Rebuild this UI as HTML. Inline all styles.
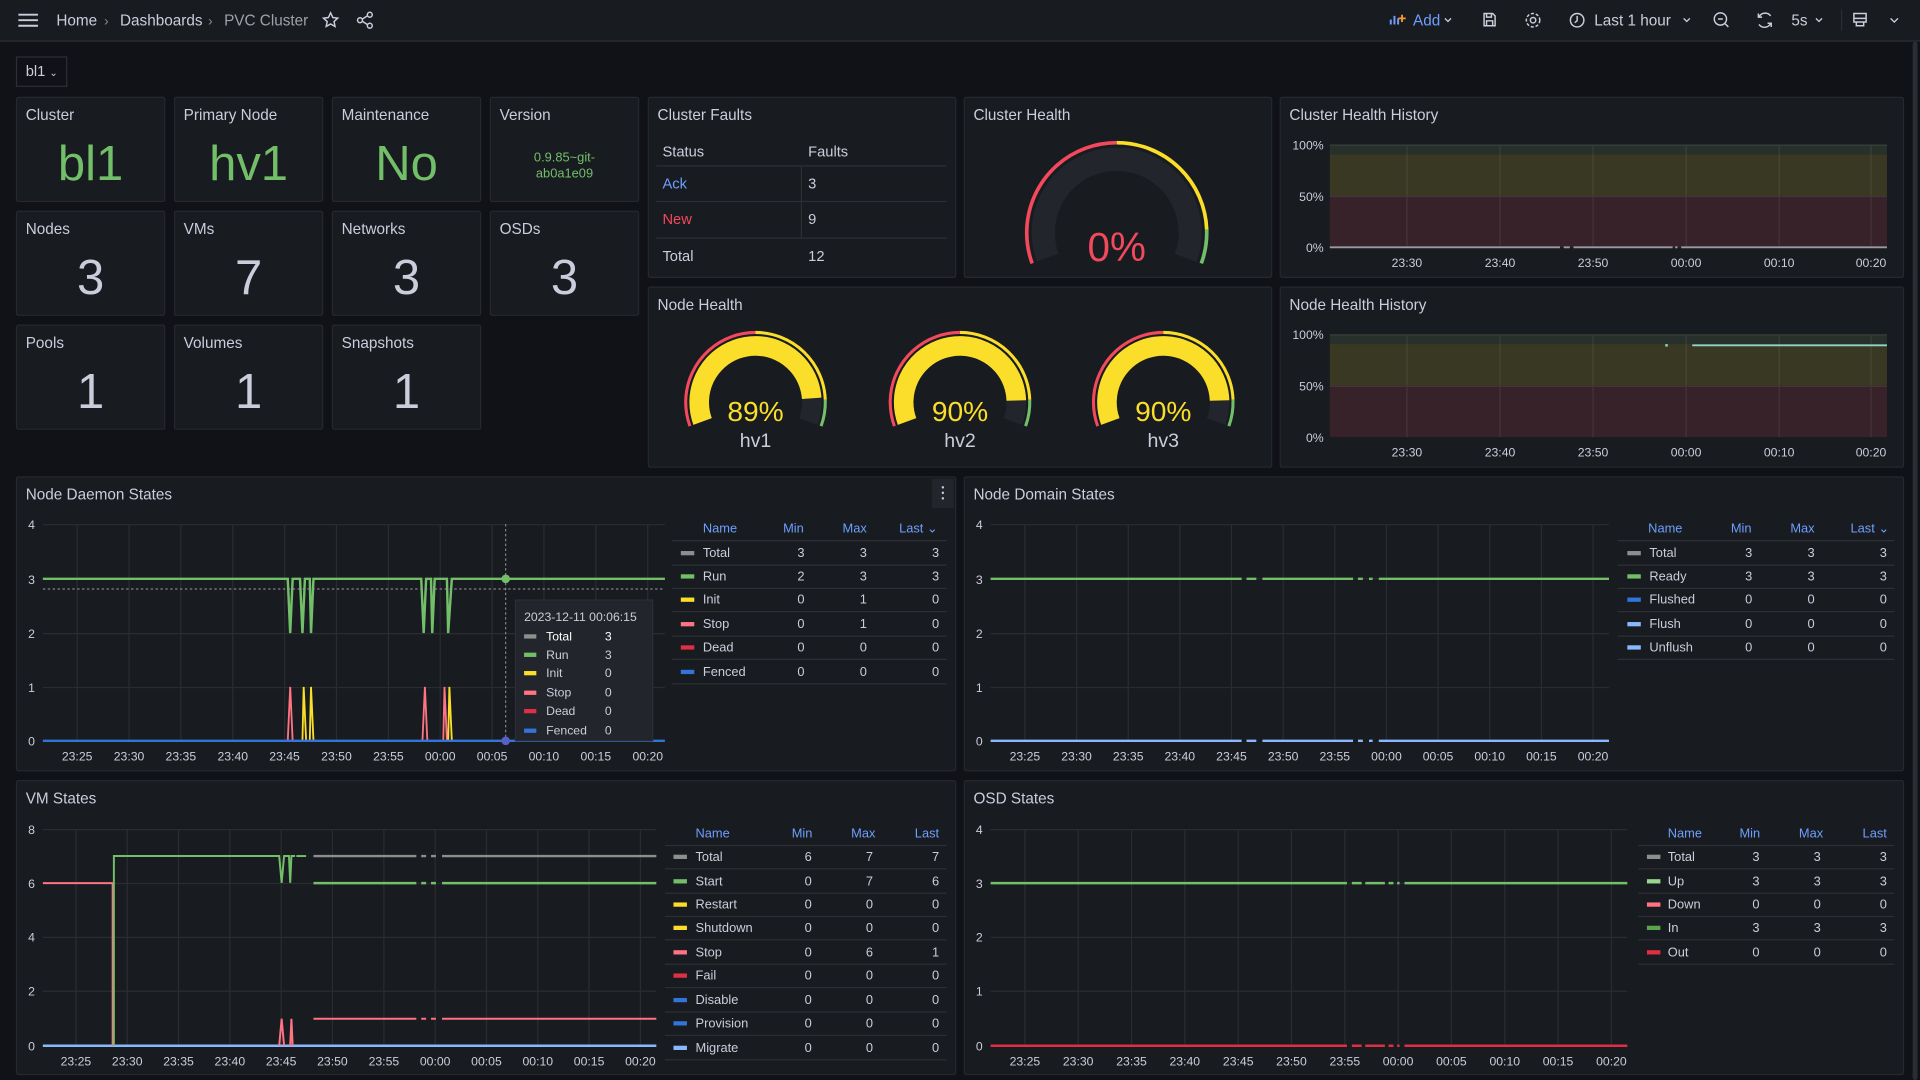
<!DOCTYPE html>
<html><head><meta charset="utf-8"><style>
html,body{margin:0;padding:0;background:#111217;width:1920px;height:1080px;overflow:hidden}
#root{position:absolute;left:0;top:0;width:1568px;height:882px;transform:scale(1.2244898);transform-origin:0 0;font-family:"Liberation Sans",sans-serif;color:#ccccdc}
.top{position:absolute;left:0;top:0;width:1568px;height:33px;background:#181b1f;border-bottom:1px solid #2c2f36}
.p{position:absolute;background:#181b1f;border:1px solid #25282e;box-sizing:border-box;border-radius:2px}
.t{position:absolute;left:7px;top:7px;font-size:12.5px;color:#ccccdc}
.v{position:absolute;left:0;right:0;text-align:center}
svg text{font-family:"Liberation Sans",sans-serif}
</style></head><body><div id="root">
<div class="top"></div>
<div style="position:absolute;left:1562px;top:34px;width:4px;height:848px;background:#2a2d33;border-radius:2px"></div>
<div style="position:absolute;left:13px;top:46px;width:42px;height:25px;border:1px solid #2c2f36;box-sizing:border-box;background:#111217;font-size:12px;line-height:23px;padding-left:7px">bl1 <span style="font-size:8px">⌄</span></div>

<div class="p" style="left:13px;top:79px;width:122px;height:86px"><div class="t">Cluster</div><div class="v" style="top:32px;font-size:40px;color:#73bf69">bl1</div></div>
<div class="p" style="left:142px;top:79px;width:122px;height:86px"><div class="t">Primary Node</div><div class="v" style="top:32px;font-size:40px;color:#73bf69">hv1</div></div>
<div class="p" style="left:271px;top:79px;width:122px;height:86px"><div class="t">Maintenance</div><div class="v" style="top:32px;font-size:40px;color:#73bf69">No</div></div>
<div class="p" style="left:400px;top:79px;width:122px;height:86px"><div class="t">Version</div><div class="v" style="top:43px;font-size:10.5px;line-height:13px;color:#73bf69">0.9.85~git-<br>ab0a1e09</div></div>
<div class="p" style="left:13px;top:172px;width:122px;height:86px"><div class="t">Nodes</div><div class="v" style="top:32px;font-size:40px">3</div></div>
<div class="p" style="left:142px;top:172px;width:122px;height:86px"><div class="t">VMs</div><div class="v" style="top:32px;font-size:40px">7</div></div>
<div class="p" style="left:271px;top:172px;width:122px;height:86px"><div class="t">Networks</div><div class="v" style="top:32px;font-size:40px">3</div></div>
<div class="p" style="left:400px;top:172px;width:122px;height:86px"><div class="t">OSDs</div><div class="v" style="top:32px;font-size:40px">3</div></div>
<div class="p" style="left:13px;top:265px;width:122px;height:86px"><div class="t">Pools</div><div class="v" style="top:32px;font-size:40px">1</div></div>
<div class="p" style="left:142px;top:265px;width:122px;height:86px"><div class="t">Volumes</div><div class="v" style="top:32px;font-size:40px">1</div></div>
<div class="p" style="left:271px;top:265px;width:122px;height:86px"><div class="t">Snapshots</div><div class="v" style="top:32px;font-size:40px">1</div></div>

<div class="p" style="left:529px;top:79px;width:252px;height:148px"><div class="t">Cluster Faults</div></div>
<div class="p" style="left:787px;top:79px;width:252px;height:148px"><div class="t">Cluster Health</div></div>
<div class="p" style="left:1045px;top:79px;width:510px;height:148px"><div class="t">Cluster Health History</div></div>
<div class="p" style="left:529px;top:234px;width:510px;height:148px"><div class="t">Node Health</div></div>
<div class="p" style="left:1045px;top:234px;width:510px;height:148px"><div class="t">Node Health History</div></div>
<div class="p" style="left:13px;top:389px;width:768px;height:241px"><div class="t">Node Daemon States</div></div>
<div class="p" style="left:787px;top:389px;width:768px;height:241px"><div class="t">Node Domain States</div></div>
<div class="p" style="left:13px;top:637px;width:768px;height:241px"><div class="t">VM States</div></div>
<div class="p" style="left:787px;top:637px;width:768px;height:241px"><div class="t">OSD States</div></div>

<svg width="1568" height="882" style="position:absolute;left:0;top:0" font-size="12">
<!-- topbar -->
<g stroke="#ccccdc" stroke-width="1.6" fill="none">
<path d="M15 12H31M15 16.5H31M15 21H31"/>
<path d="M270 10.5l1.8 3.8 4 .5-3 2.8.8 4-3.6-2-3.6 2 .8-4-3-2.8 4-.5z" stroke-width="1.2"/>
<circle cx="302" cy="12" r="2" stroke-width="1.2"/><circle cx="294" cy="16.5" r="2" stroke-width="1.2"/><circle cx="302" cy="21" r="2" stroke-width="1.2"/><path d="M296 15.5l4-2.5M296 17.5l4 2.5" stroke-width="1.2"/>
<path d="M1212 11h7l2 2v8h-9zM1214 11v3h4v-3M1214 21v-4h5v4" stroke-width="1.2"/>
<circle cx="1252" cy="16.5" r="2.2" stroke-width="1.2"/><circle cx="1252" cy="16.5" r="5.5" stroke-width="1.2" stroke-dasharray="2.5 1.5"/>
<circle cx="1288" cy="16.5" r="5.5" stroke-width="1.2"/><path d="M1288 13v4l-2 1.5" stroke-width="1.2"/>
<circle cx="1405" cy="15.5" r="5" stroke-width="1.2"/><path d="M1403 15.5h4M1409 19.5l2.5 2.5" stroke-width="1.2"/>
<path d="M1446 13a5.5 5.5 0 0 0-9.5 1M1436.5 20a5.5 5.5 0 0 0 9.5-1M1436 11v3h3M1446.5 22v-3h-3" stroke-width="1.2"/>
<path d="M1514 11h10v7h-10zM1516 18v3h6v-3M1514 15h10" stroke-width="1.2"/>
<path d="M1180 15l2.5 2.5 2.5-2.5M1375 15l2.5 2.5 2.5-2.5M1483 15l2.5 2.5 2.5-2.5M1544 15l3 3 3-3" stroke-width="1.1"/>
</g>
<path d="M1135 20v-4h1.6v4zM1138 20v-7h1.6v7zM1141 20v-5h1.6v5z" fill="#6e9fff"/><path d="M1145 12v6M1142 15h6" stroke="#ff9830" stroke-width="1.5"/>
<line x1="1504" y1="8" x2="1504" y2="25" stroke="#2c2f36"/>
<text x="46" y="21" fill="#ccccdc" font-size="12.5">Home</text>
<text x="85" y="21" fill="#8e8e99" font-size="11">›</text>
<text x="98" y="21" fill="#ccccdc" font-size="12.5">Dashboards</text>
<text x="170" y="21" fill="#8e8e99" font-size="11">›</text>
<text x="183" y="21" fill="#9fa1a8" font-size="12.5">PVC Cluster</text>
<text x="1154" y="21" fill="#6e9fff" font-size="12.5">Add</text>
<text x="1302" y="21" fill="#ccccdc" font-size="12.5">Last 1 hour</text>
<text x="1463" y="21" fill="#ccccdc" font-size="12.5">5s</text>

<!-- cluster faults -->
<g font-size="12">
<text x="541" y="128" fill="#ccccdc">Status</text><text x="660" y="128" fill="#ccccdc">Faults</text>
<text x="541" y="154" fill="#6e9fff">Ack</text><text x="660" y="154" fill="#ccccdc">3</text>
<text x="541" y="183" fill="#f2495c">New</text><text x="660" y="183" fill="#ccccdc">9</text>
<text x="541" y="213" fill="#ccccdc">Total</text><text x="660" y="213" fill="#ccccdc">12</text>
</g>
<g stroke="#2c2f36"><path d="M536 135.5H773M536 164.5H773M536 194.5H773M654.5 136V194"/></g>

<!-- cluster gauge -->
<g fill="none">
<circle cx="912" cy="190" r="60" stroke="#22252b" stroke-width="19" stroke-dasharray="230.4 1000" transform="rotate(-200 912 190)"/>
<circle cx="912" cy="190" r="73.5" stroke="#f2495c" stroke-width="3" stroke-dasharray="141.1 1000" transform="rotate(-200 912 190)"/>
<circle cx="912" cy="190" r="73.5" stroke="#fade2a" stroke-width="3" stroke-dasharray="112.9 1000" transform="rotate(-90 912 190)"/>
<circle cx="912" cy="190" r="73.5" stroke="#73bf69" stroke-width="3" stroke-dasharray="28.2 1000" transform="rotate(-2 912 190)"/>
</g>
<text x="912" y="213" fill="#f2495c" font-size="33" text-anchor="middle">0%</text>

<!-- node gauges -->
<g fill="none">
<g id="g1">
<circle cx="617" cy="328.5" r="46" stroke="#22252b" stroke-width="16" stroke-dasharray="176.6 1000" transform="rotate(-200 617 328.5)"/>
<circle cx="617" cy="328.5" r="46" stroke="#fade2a" stroke-width="16" stroke-dasharray="157.2 1000" transform="rotate(-200 617 328.5)"/>
<circle cx="617" cy="328.5" r="57" stroke="#f2495c" stroke-width="2.5" stroke-dasharray="109.4 1000" transform="rotate(-200 617 328.5)"/>
<circle cx="617" cy="328.5" r="57" stroke="#fade2a" stroke-width="2.5" stroke-dasharray="87.5 1000" transform="rotate(-90 617 328.5)"/>
<circle cx="617" cy="328.5" r="57" stroke="#73bf69" stroke-width="2.5" stroke-dasharray="21.9 1000" transform="rotate(-2 617 328.5)"/>
</g>
<circle cx="784" cy="328.5" r="46" stroke="#22252b" stroke-width="16" stroke-dasharray="176.6 1000" transform="rotate(-200 784 328.5)"/>
<circle cx="784" cy="328.5" r="46" stroke="#fade2a" stroke-width="16" stroke-dasharray="159 1000" transform="rotate(-200 784 328.5)"/>
<circle cx="784" cy="328.5" r="57" stroke="#f2495c" stroke-width="2.5" stroke-dasharray="109.4 1000" transform="rotate(-200 784 328.5)"/>
<circle cx="784" cy="328.5" r="57" stroke="#fade2a" stroke-width="2.5" stroke-dasharray="87.5 1000" transform="rotate(-90 784 328.5)"/>
<circle cx="784" cy="328.5" r="57" stroke="#73bf69" stroke-width="2.5" stroke-dasharray="21.9 1000" transform="rotate(-2 784 328.5)"/>
<circle cx="950" cy="328.5" r="46" stroke="#22252b" stroke-width="16" stroke-dasharray="176.6 1000" transform="rotate(-200 950 328.5)"/>
<circle cx="950" cy="328.5" r="46" stroke="#fade2a" stroke-width="16" stroke-dasharray="159 1000" transform="rotate(-200 950 328.5)"/>
<circle cx="950" cy="328.5" r="57" stroke="#f2495c" stroke-width="2.5" stroke-dasharray="109.4 1000" transform="rotate(-200 950 328.5)"/>
<circle cx="950" cy="328.5" r="57" stroke="#fade2a" stroke-width="2.5" stroke-dasharray="87.5 1000" transform="rotate(-90 950 328.5)"/>
<circle cx="950" cy="328.5" r="57" stroke="#73bf69" stroke-width="2.5" stroke-dasharray="21.9 1000" transform="rotate(-2 950 328.5)"/>
</g>
<g font-size="23" fill="#fade2a" text-anchor="middle"><text x="617" y="344">89%</text><text x="784" y="344">90%</text><text x="950" y="344">90%</text></g>
<g font-size="16" fill="#ccccdc" text-anchor="middle"><text x="617" y="365">hv1</text><text x="784" y="365">hv2</text><text x="950" y="365">hv3</text></g>

<!-- health histories -->
<g>
<rect x="1086" y="118" width="455" height="8" fill="#27302a"/><rect x="1086" y="126" width="455" height="34" fill="#393822"/><rect x="1086" y="160" width="455" height="42" fill="#38222a"/>
<rect x="1086" y="273" width="455" height="8" fill="#27302a"/><rect x="1086" y="281" width="455" height="34" fill="#393822"/><rect x="1086" y="315" width="455" height="42" fill="#38222a"/>
<g stroke="#ffffff" stroke-opacity="0.08"><path d="M1149 118V202M1225 118V202M1301 118V202M1377 118V202M1453 118V202M1528 118V202M1086 118.5H1541M1086 160.5H1541"/>
<path d="M1149 273V357M1225 273V357M1301 273V357M1377 273V357M1453 273V357M1528 273V357M1086 273.5H1541M1086 315.5H1541"/></g>
<path d="M1086 202H1274M1277 202H1282M1285 202H1366M1368 202H1370M1373 202H1541" stroke="#9a9aa4" stroke-width="1.5"/>
<path d="M1382 282H1541" stroke="#8fd6c7" stroke-width="1.5"/><rect x="1360" y="281" width="2" height="2" fill="#8fd6c7"/>
<g font-size="10" fill="#ccccdc" text-anchor="end"><text x="1081" y="122">100%</text><text x="1081" y="164">50%</text><text x="1081" y="206">0%</text>
<text x="1081" y="277">100%</text><text x="1081" y="319">50%</text><text x="1081" y="361">0%</text></g>
<g font-size="10" fill="#ccccdc" text-anchor="middle"><text x="1149" y="218">23:30</text><text x="1225" y="218">23:40</text><text x="1301" y="218">23:50</text><text x="1377" y="218">00:00</text><text x="1453" y="218">00:10</text><text x="1528" y="218">00:20</text>
<text x="1149" y="373">23:30</text><text x="1225" y="373">23:40</text><text x="1301" y="373">23:50</text><text x="1377" y="373">00:00</text><text x="1453" y="373">00:10</text><text x="1528" y="373">00:20</text></g>
</g>

<!-- Node daemon states -->
<rect x="761" y="391" width="18" height="24" fill="#22252b"/><g fill="#ccccdc"><circle cx="770" cy="398" r="1"/><circle cx="770" cy="402.5" r="1"/><circle cx="770" cy="407" r="1"/></g>
<g stroke="#ffffff" stroke-opacity="0.08">
<path d="M35 428.5H543M35 472.5H543M35 517.5H543M35 561.5H543M63 428V605M105.4 428V605M147.7 428V605M190.1 428V605M232.4 428V605M274.8 428V605M317.2 428V605M359.5 428V605M401.9 428V605M444.2 428V605M486.6 428V605M529 428V605"/>
<path d="M809 428.5H1314M809 472.5H1314M809 517.5H1314M809 561.5H1314M837 428V605M879.2 428V605M921.4 428V605M963.5 428V605M1005.7 428V605M1047.9 428V605M1090.1 428V605M1132.3 428V605M1174.4 428V605M1216.6 428V605M1258.8 428V605M1301 428V605"/>
<path d="M35 677.5H536M35 721.5H536M35 765.5H536M35 809.5H536M62 677V854M103.9 677V854M145.8 677V854M187.7 677V854M229.6 677V854M271.5 677V854M313.5 677V854M355.4 677V854M397.3 677V854M439.2 677V854M481.1 677V854M523 677V854"/>
<path d="M809 677.5H1329M809 721.5H1329M809 765.5H1329M809 809.5H1329M837 677V854M880.5 677V854M924.1 677V854M967.6 677V854M1011.2 677V854M1054.7 677V854M1098.3 677V854M1141.8 677V854M1185.3 677V854M1228.9 677V854M1272.4 677V854M1316 677V854"/>
</g>
<g font-size="10" fill="#ccccdc">
<text x="23" y="432">4</text><text x="23" y="477">3</text><text x="23" y="521">2</text><text x="23" y="565">1</text><text x="23" y="609">0</text>
<text x="797" y="432">4</text><text x="797" y="477">3</text><text x="797" y="521">2</text><text x="797" y="565">1</text><text x="797" y="609">0</text>
<text x="23" y="681">8</text><text x="23" y="725">6</text><text x="23" y="769">4</text><text x="23" y="813">2</text><text x="23" y="858">0</text>
<text x="797" y="681">4</text><text x="797" y="725">3</text><text x="797" y="769">2</text><text x="797" y="813">1</text><text x="797" y="858">0</text>
</g>
<g font-size="10" fill="#ccccdc" text-anchor="middle">
<text x="63" y="621">23:25</text><text x="105.4" y="621">23:30</text><text x="147.7" y="621">23:35</text><text x="190.1" y="621">23:40</text><text x="232.4" y="621">23:45</text><text x="274.8" y="621">23:50</text><text x="317.2" y="621">23:55</text><text x="359.5" y="621">00:00</text><text x="401.9" y="621">00:05</text><text x="444.2" y="621">00:10</text><text x="486.6" y="621">00:15</text><text x="529" y="621">00:20</text>
<text x="837" y="621">23:25</text><text x="879.2" y="621">23:30</text><text x="921.4" y="621">23:35</text><text x="963.5" y="621">23:40</text><text x="1005.7" y="621">23:45</text><text x="1047.9" y="621">23:50</text><text x="1090.1" y="621">23:55</text><text x="1132.3" y="621">00:00</text><text x="1174.4" y="621">00:05</text><text x="1216.6" y="621">00:10</text><text x="1258.8" y="621">00:15</text><text x="1301" y="621">00:20</text>
<text x="62" y="870">23:25</text><text x="103.9" y="870">23:30</text><text x="145.8" y="870">23:35</text><text x="187.7" y="870">23:40</text><text x="229.6" y="870">23:45</text><text x="271.5" y="870">23:50</text><text x="313.5" y="870">23:55</text><text x="355.4" y="870">00:00</text><text x="397.3" y="870">00:05</text><text x="439.2" y="870">00:10</text><text x="481.1" y="870">00:15</text><text x="523" y="870">00:20</text>
<text x="837" y="870">23:25</text><text x="880.5" y="870">23:30</text><text x="924.1" y="870">23:35</text><text x="967.6" y="870">23:40</text><text x="1011.2" y="870">23:45</text><text x="1054.7" y="870">23:50</text><text x="1098.3" y="870">23:55</text><text x="1141.8" y="870">00:00</text><text x="1185.3" y="870">00:05</text><text x="1228.9" y="870">00:10</text><text x="1272.4" y="870">00:15</text><text x="1316" y="870">00:20</text>
</g>
<!-- daemon lines -->
<g fill="none" stroke-width="1.5">
<path d="M235 605L237 561L239 605M345 605L347 561L349 605M362 605L363 561L365 605" stroke="#ff7383"/>
<path d="M247 605L248 561L250 605M253 605L254 561L256 605M366 605L367 561L369 605" stroke="#fade2a"/>
<path d="M35 472.7H235L237 517L239 472.7H245L247 517L249 472.7H253L254 517L256 472.7H344L346 517L348 472.7H352L353 517L355 472.7H365L366 517L369 472.7H543" stroke="#73bf69" stroke-width="2"/>
<path d="M35 605H543" stroke="#3274d9" stroke-width="2"/>
<path d="M413 428V605M35 481H543" stroke="#9a9aa4" stroke-width="0.8" stroke-dasharray="2 2"/>
</g>
<circle cx="413" cy="472.7" r="3.5" fill="#73bf69"/><circle cx="413" cy="605" r="3.5" fill="#5a5ec7"/>
<rect x="421" y="490" width="112" height="115" fill="#22252b" stroke="#2c2f36"/>
<g font-size="10" fill="#ccccdc">
<text x="428" y="507">2023-12-11 00:06:15</text>
<text x="446" y="523" fill="#fff">Total</text><text x="494" y="523" fill="#fff">3</text>
<text x="446" y="538">Run</text><text x="494" y="538">3</text>
<text x="446" y="553">Init</text><text x="494" y="553">0</text>
<text x="446" y="569">Stop</text><text x="494" y="569">0</text>
<text x="446" y="584">Dead</text><text x="494" y="584">0</text>
<text x="446" y="600">Fenced</text><text x="494" y="600">0</text>
</g>
<g><rect x="428" y="518" width="10" height="3.5" fill="#8e8e8e"/><rect x="428" y="533" width="10" height="3.5" fill="#73bf69"/><rect x="428" y="548" width="10" height="3.5" fill="#fade2a"/><rect x="428" y="564" width="10" height="3.5" fill="#ff7383"/><rect x="428" y="579" width="10" height="3.5" fill="#e02f44"/><rect x="428" y="595" width="10" height="3.5" fill="#3274d9"/></g>

<!-- domain lines -->
<g fill="none" stroke-width="2">
<path d="M809 472.7H1014M1018 472.7H1026M1031 472.7H1105M1109 472.7H1113M1118 472.7H1121M1126 472.7H1314" stroke="#73bf69"/>
<path d="M809 605H1014M1018 605H1026M1031 605H1105M1109 605H1113M1118 605H1121M1126 605H1314" stroke="#8ab8ff"/>
</g>
<!-- VM lines -->
<g fill="none" stroke-width="2">
<path d="M35 854H536" stroke="#8ab8ff"/>
<path d="M35 721.2H92V854M228 854L230 832L232 854M237 854L238 832L239 854M256 832H340M344 832H348M352 832H356M361 832H536" stroke="#ff7383" stroke-width="1.6"/>
<path d="M93 854V699.1H228L230 721L232 699.1H236L237 721L238 699.1H241" stroke="#73bf69" stroke-width="1.6"/>
<path d="M242 699.1H250" stroke="#73bf69" stroke-width="1.6"/>
<path d="M256 699.1H340M344 699.1H348M352 699.1H356M361 699.1H536" stroke="#8e8e8e"/>
<path d="M256 721.2H340M344 721.2H348M352 721.2H356M361 721.2H536" stroke="#73bf69"/>
</g>
<!-- OSD lines -->
<g fill="none" stroke-width="2">
<path d="M809 721.2H1100M1104 721.2H1112M1115 721.2H1131M1134 721.2H1138M1141 721.2H1143M1147 721.2H1329" stroke="#73bf69"/>
<path d="M809 854H1100M1104 854H1112M1115 854H1131M1134 854H1138M1141 854H1143M1147 854H1329" stroke="#e02f44"/>
</g>

<!-- legends -->
<g font-size="10.5">
<g fill="#6e9fff" text-anchor="middle"><text x="588" y="435">Name</text><text x="648" y="435">Min</text><text x="698" y="435">Max</text><text x="750" y="435">Last ⌄</text>
<text x="1360" y="435">Name</text><text x="1422" y="435">Min</text><text x="1472" y="435">Max</text><text x="1527" y="435">Last ⌄</text>
<text x="582" y="684">Name</text><text x="655" y="684">Min</text><text x="705" y="684">Max</text><text x="757" y="684">Last</text>
<text x="1376" y="684">Name</text><text x="1429" y="684">Min</text><text x="1479" y="684">Max</text><text x="1531" y="684">Last</text></g>
<g stroke="#2c2f36"><path d="M549 441.5H773M549 461.5H773M549 480.5H773M549 499.5H773M549 519.5H773M549 538.5H773M549 558.5H773"/>
<path d="M1321 441.5H1547M1321 461.5H1547M1321 480.5H1547M1321 499.5H1547M1321 519.5H1547M1321 538.5H1547"/>
<path d="M543 690.5H773M543 709.5H773M543 729.5H773M543 748.5H773M543 767.5H773M543 787.5H773M543 806.5H773M543 826.5H773M543 845.5H773M543 865.5H773"/>
<path d="M1338 690.5H1547M1338 709.5H1547M1338 729.5H1547M1338 748.5H1547M1338 767.5H1547M1338 787.5H1547"/></g>
<g fill="#ccccdc">
<text x="574" y="455">Total</text><text x="574" y="474">Run</text><text x="574" y="493">Init</text><text x="574" y="513">Stop</text><text x="574" y="532">Dead</text><text x="574" y="552">Fenced</text>
<g text-anchor="end"><text x="657" y="455">3</text><text x="708" y="455">3</text><text x="767" y="455">3</text>
<text x="657" y="474">2</text><text x="708" y="474">3</text><text x="767" y="474">3</text>
<text x="657" y="493">0</text><text x="708" y="493">1</text><text x="767" y="493">0</text>
<text x="657" y="513">0</text><text x="708" y="513">1</text><text x="767" y="513">0</text>
<text x="657" y="532">0</text><text x="708" y="532">0</text><text x="767" y="532">0</text>
<text x="657" y="552">0</text><text x="708" y="552">0</text><text x="767" y="552">0</text></g>
<text x="1347" y="455">Total</text><text x="1347" y="474">Ready</text><text x="1347" y="493">Flushed</text><text x="1347" y="513">Flush</text><text x="1347" y="532">Unflush</text>
<g text-anchor="end"><text x="1431" y="455">3</text><text x="1482" y="455">3</text><text x="1541" y="455">3</text>
<text x="1431" y="474">3</text><text x="1482" y="474">3</text><text x="1541" y="474">3</text>
<text x="1431" y="493">0</text><text x="1482" y="493">0</text><text x="1541" y="493">0</text>
<text x="1431" y="513">0</text><text x="1482" y="513">0</text><text x="1541" y="513">0</text>
<text x="1431" y="532">0</text><text x="1482" y="532">0</text><text x="1541" y="532">0</text></g>
<text x="568" y="703">Total</text><text x="568" y="723">Start</text><text x="568" y="742">Restart</text><text x="568" y="761">Shutdown</text><text x="568" y="781">Stop</text><text x="568" y="800">Fail</text><text x="568" y="820">Disable</text><text x="568" y="839">Provision</text><text x="568" y="859">Migrate</text>
<g text-anchor="end"><text x="663" y="703">6</text><text x="713" y="703">7</text><text x="767" y="703">7</text>
<text x="663" y="723">0</text><text x="713" y="723">7</text><text x="767" y="723">6</text>
<text x="663" y="742">0</text><text x="713" y="742">0</text><text x="767" y="742">0</text>
<text x="663" y="761">0</text><text x="713" y="761">0</text><text x="767" y="761">0</text>
<text x="663" y="781">0</text><text x="713" y="781">6</text><text x="767" y="781">1</text>
<text x="663" y="800">0</text><text x="713" y="800">0</text><text x="767" y="800">0</text>
<text x="663" y="820">0</text><text x="713" y="820">0</text><text x="767" y="820">0</text>
<text x="663" y="839">0</text><text x="713" y="839">0</text><text x="767" y="839">0</text>
<text x="663" y="859">0</text><text x="713" y="859">0</text><text x="767" y="859">0</text></g>
<text x="1362" y="703">Total</text><text x="1362" y="723">Up</text><text x="1362" y="742">Down</text><text x="1362" y="761">In</text><text x="1362" y="781">Out</text>
<g text-anchor="end"><text x="1437" y="703">3</text><text x="1487" y="703">3</text><text x="1541" y="703">3</text>
<text x="1437" y="723">3</text><text x="1487" y="723">3</text><text x="1541" y="723">3</text>
<text x="1437" y="742">0</text><text x="1487" y="742">0</text><text x="1541" y="742">0</text>
<text x="1437" y="761">3</text><text x="1487" y="761">3</text><text x="1541" y="761">3</text>
<text x="1437" y="781">0</text><text x="1487" y="781">0</text><text x="1541" y="781">0</text></g>
</g>
<g>
<rect x="556" y="450" width="11" height="3.5" fill="#8e8e8e"/><rect x="556" y="469" width="11" height="3.5" fill="#73bf69"/><rect x="556" y="488" width="11" height="3.5" fill="#fade2a"/><rect x="556" y="508" width="11" height="3.5" fill="#ff7383"/><rect x="556" y="527" width="11" height="3.5" fill="#e02f44"/><rect x="556" y="547" width="11" height="3.5" fill="#3274d9"/>
<rect x="1329" y="450" width="11" height="3.5" fill="#8e8e8e"/><rect x="1329" y="469" width="11" height="3.5" fill="#73bf69"/><rect x="1329" y="488" width="11" height="3.5" fill="#3274d9"/><rect x="1329" y="508" width="11" height="3.5" fill="#8ab8ff"/><rect x="1329" y="527" width="11" height="3.5" fill="#8ab8ff"/>
<rect x="550" y="698" width="11" height="3.5" fill="#8e8e8e"/><rect x="550" y="718" width="11" height="3.5" fill="#73bf69"/><rect x="550" y="737" width="11" height="3.5" fill="#fade2a"/><rect x="550" y="756" width="11" height="3.5" fill="#fade2a"/><rect x="550" y="776" width="11" height="3.5" fill="#ff7383"/><rect x="550" y="795" width="11" height="3.5" fill="#e02f44"/><rect x="550" y="815" width="11" height="3.5" fill="#3274d9"/><rect x="550" y="834" width="11" height="3.5" fill="#3274d9"/><rect x="550" y="854" width="11" height="3.5" fill="#8ab8ff"/>
<rect x="1345" y="698" width="11" height="3.5" fill="#8e8e8e"/><rect x="1345" y="718" width="11" height="3.5" fill="#96d98d"/><rect x="1345" y="737" width="11" height="3.5" fill="#ff7383"/><rect x="1345" y="756" width="11" height="3.5" fill="#56a64b"/><rect x="1345" y="776" width="11" height="3.5" fill="#e02f44"/>
</g>
</g>
</svg>
</div></body></html>
